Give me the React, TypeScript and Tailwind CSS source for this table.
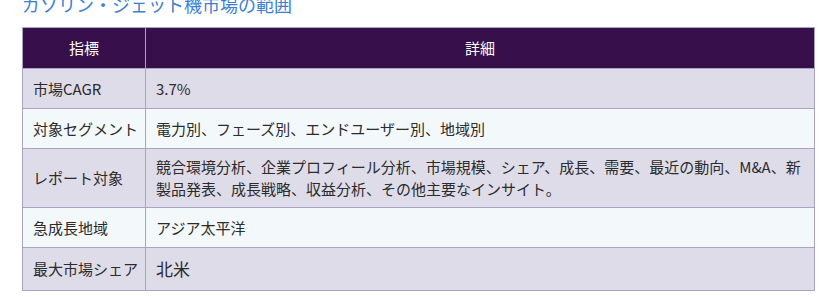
import React from "react";

const rows: { k: string; v: string; alt: boolean; big?: boolean }[] = [
  { k: "市場CAGR", v: "3.7%", alt: false },
  { k: "対象セグメント", v: "電力別、フェーズ別、エンドユーザー別、地域別", alt: true },
  {
    k: "レポート対象",
    v: "競合環境分析、企業プロフィール分析、市場規模、シェア、成長、需要、最近の動向、M&A、新製品発表、成長戦略、収益分析、その他主要なインサイト。",
    alt: false,
  },
  { k: "急成長地域", v: "アジア太平洋", alt: true },
  { k: "最大市場シェア", v: "北米", alt: false, big: true },
];

export default function App() {
  return (
    <div
      className="w-[820px] h-[297px] overflow-hidden bg-white"
      style={{ fontFamily: '"Noto Sans CJK JP", "Noto Sans", sans-serif' }}
    >
      <h2 className="ml-[22px] mt-[-9px] h-[36px] text-[18px] leading-[26px] text-[#3c7fd0] font-normal">
        ガソリン・ジェット機市場の範囲
      </h2>
      <table className="ml-[22px] w-[793px] table-fixed border-collapse text-[15px] leading-[22px] text-[#2b2b2b]">
        <colgroup>
          <col className="w-[123px]" />
          <col />
        </colgroup>
        <thead>
          <tr className="bg-[#37104b] text-white h-[41px]">
            <th className="border border-[#aaa3c4] font-normal text-center">指標</th>
            <th className="border border-[#aaa3c4] font-normal text-center">詳細</th>
          </tr>
        </thead>
        <tbody>
          {rows.map((r) => (
            <tr
              key={r.k}
              className={(r.alt ? "bg-[#f3f8fb]" : "bg-[#dfdcea]") + (r.big ? " h-[43px]" : " h-[40px]")}
            >
              <td className="border border-[#aaa3c4] px-[10px] py-[7px] align-middle whitespace-nowrap">{r.k}</td>
              <td
                className={
                  "border border-[#aaa3c4] pl-[10px] pr-[8px] py-[7px] align-middle " +
                  (r.big ? "text-[17px]" : "")
                }
              >
                {r.v}
              </td>
            </tr>
          ))}
        </tbody>
      </table>
    </div>
  );
}
